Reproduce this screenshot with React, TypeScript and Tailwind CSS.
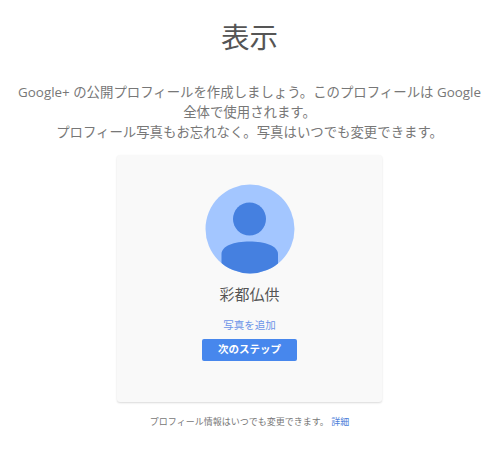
const font = "font-['Open_Sans','Noto_Sans_CJK_JP',sans-serif]";

function Avatar() {
  return (
    <svg width="90" height="90" viewBox="0 0 90 90" className="block">
      <defs>
        <clipPath id="avatar-clip">
          <circle cx="45" cy="45" r="44.5" />
        </clipPath>
      </defs>
      <circle cx="45" cy="45" r="44.5" fill="#a3c6ff" />
      <circle cx="44.5" cy="35" r="16.5" fill="#4580e0" />
      <path
        clipPath="url(#avatar-clip)"
        d="M16.5 90V70C16.5 62 29 57.5 44.5 57.5S73 62 73 70V90Z"
        fill="#4580e0"
      />
    </svg>
  );
}

export default function App() {
  return (
    <div className={`${font} flex min-h-[449px] flex-col items-center bg-white pr-[1px] text-[#666]`}>
      <h1 className="mt-[17px] text-[28.5px] leading-[40px] font-normal text-[#555]">表示</h1>

      <p className="mt-[25px] w-[468px] text-center text-[13.4px] leading-[20px] text-[#777]">
        Google+ の公開プロフィールを作成しましょう。このプロフィールは Google 全体で使用されます。
        <br />
        プロフィール写真もお忘れなく。写真はいつでも変更できます。
      </p>

      <div className="mt-[13px] flex h-[247px] w-[265px] flex-col items-center rounded-[3px] bg-[#f9f9f9] pt-[29px] shadow-[0_1px_2px_rgba(0,0,0,0.15)]">
        <Avatar />
        <div className="mt-[9px] text-[15px] leading-[22px] text-[#555]">彩都仏供</div>
        <a className="mt-[13px] text-[10.5px] leading-[14px] text-[#6d94e8]">写真を追加</a>
        <button className="mt-[7px] h-[22px] w-[95px] rounded-[2px] bg-[#4787ed] text-[10.5px] font-bold text-white">
          次のステップ
        </button>
      </div>

      <p className="mt-[13px] text-[9px] leading-[14px] text-[#777]">
        プロフィール情報はいつでも変更できます。 <a className="text-[#4d7fd9]">詳細</a>
      </p>
    </div>
  );
}
